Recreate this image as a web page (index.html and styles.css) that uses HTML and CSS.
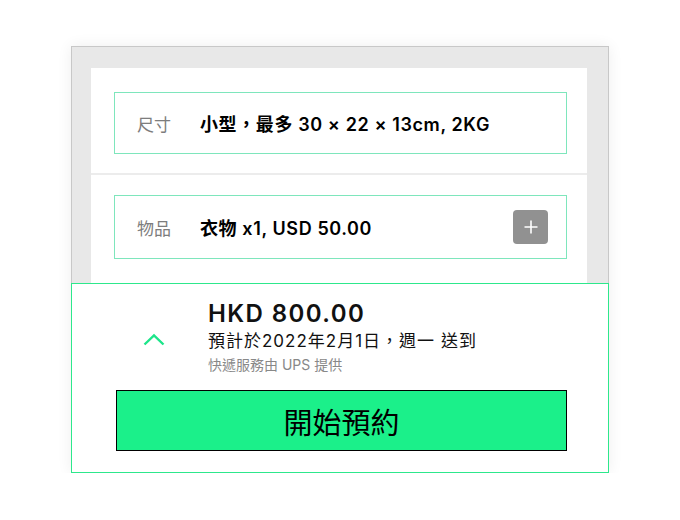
FILE: index.html
```html
<!DOCTYPE html>
<html lang="zh-Hant">
<head>
    <meta charset="UTF-8">
    <title>寄件</title>
    <link rel="stylesheet" href="styles.css">
</head>
<body>
    <div class="phone">
        <div class="scroll">
            <div class="card">
                <div class="section">
                    <div class="field">
                        <span class="label">尺寸</span>
                        <span class="value">小型，最多 30 × 22 × 13cm, 2KG</span>
                    </div>
                </div>
                <div class="section">
                    <div class="field field-tall">
                        <span class="label">物品</span>
                        <span class="value">衣物 x1, USD 50.00</span>
                        <button class="add-btn" aria-label="新增">
                            <svg width="16" height="16" viewBox="0 0 16 16">
                                <path d="M8 1.5v13M1.5 8h13" stroke="#fff" stroke-width="1.6" fill="none"/>
                            </svg>
                        </button>
                    </div>
                </div>
            </div>
        </div>
        <div class="summary">
            <div class="summary-info">
                <svg class="chevron" width="22" height="13" viewBox="0 0 22 13">
                    <path d="M1.5 11.5L11 2.3l9.5 9.2" stroke="#1de58a" stroke-width="2.4" fill="none"/>
                </svg>
                <div class="summary-text">
                    <div class="price">HKD 800.00</div>
                    <div class="eta">預計於2022年2月1日，週一 送到</div>
                    <div class="carrier">快遞服務由 UPS 提供</div>
                </div>
            </div>
            <button class="book-btn">開始預約</button>
        </div>
    </div>
</body>
</html>
```

FILE: styles.css
```css
body {
    margin: 0;
    background: #fff;
    font-family: Inter, "Noto Sans CJK TC", sans-serif;
    color: #111;
}
.phone {
    width: 538px;
    margin: 46px 0 0 71px;
    box-shadow: 0 0 14px rgba(0, 0, 0, 0.07);
}
.scroll {
    box-sizing: border-box;
    height: 237px;
    overflow: hidden;
    background: #e8e8e8;
    border: 1px solid #c8c8c8;
    border-bottom: none;
    padding: 21px 21px 0 19px;
}
.card {
    background: #fff;
    min-height: 320px;
}
.section {
    padding: 24px 20px 19px 23px;
    border-bottom: 2px solid #ececec;
}
.section + .section {
    padding-top: 20px;
    border-bottom: none;
}
.field {
    box-sizing: border-box;
    height: 62px;
    display: flex;
    align-items: center;
    border: 1px solid #7ee6bc;
    padding: 0 18px 0 22px;
}
.field-tall {
    height: 64px;
}
.label {
    width: 63px;
    font-size: 17px;
    color: #7d7d7d;
}
.value {
    flex: 1;
    font-size: 18px;
    font-weight: 600;
    letter-spacing: 0.6px;
    color: #000;
}
.add-btn {
    width: 35px;
    height: 34px;
    border: none;
    border-radius: 4px;
    background: #919191;
    display: flex;
    align-items: center;
    justify-content: center;
    padding: 0;
}
.summary {
    border: 1px solid #2de88c;
    background: #fff;
    padding: 16px 41px 21px 44px;
}
.summary-info {
    display: flex;
    align-items: center;
    padding-left: 27px;
}
.chevron {
    margin-right: 43px;
    margin-top: 4px;
}
.price {
    font-size: 24px;
    font-weight: 600;
    letter-spacing: 1.4px;
    line-height: 28px;
}
.eta {
    font-size: 17px;
    letter-spacing: 1px;
    line-height: 22px;
    margin-top: 2px;
}
.carrier {
    font-size: 14px;
    line-height: 18px;
    color: #888;
    margin-top: 4px;
}
.book-btn {
    display: block;
    width: 100%;
    height: 61px;
    margin-top: 16px;
    background: #1bf08a;
    border: 1px solid #000;
    font-family: Inter, "Noto Sans CJK TC", sans-serif;
    font-size: 29px;
    color: #000;
}
```
